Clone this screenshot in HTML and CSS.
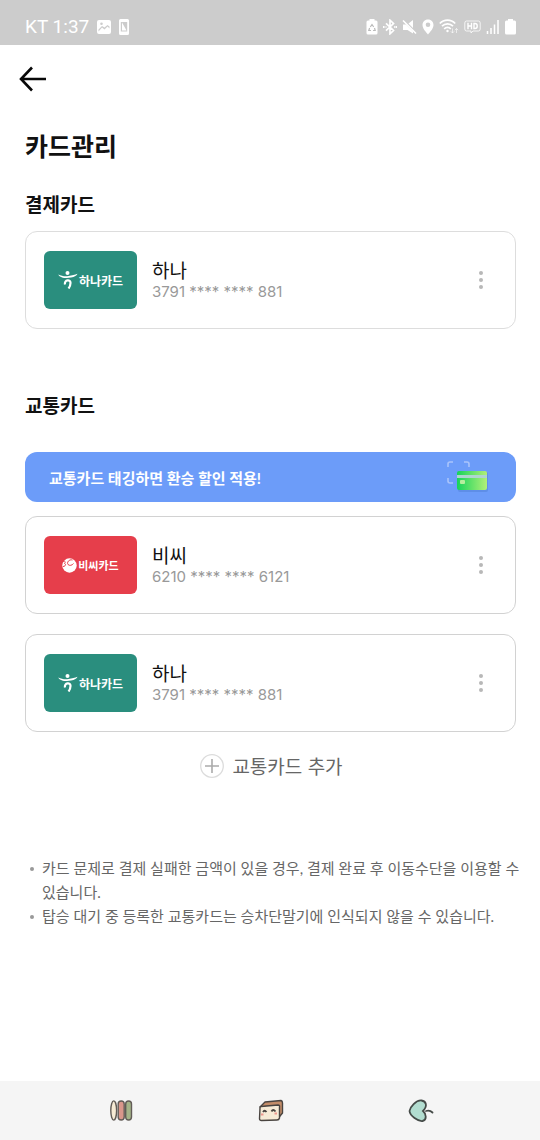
FILE: index.html
```html
<!DOCTYPE html>
<html lang="ko">
<head>
<meta charset="utf-8">
<meta name="viewport" content="width=device-width, initial-scale=1">
<title>카드관리</title>
<link rel="stylesheet" href="styles.css">
</head>
<body>
<svg class="defs" aria-hidden="true">
  <symbol id="hana" viewBox="0 0 20 18">
    <circle cx="9.500" cy="2" r="2"/>
    <path d="M.3 3.400C3.500 5 7 5.500 10.500 5C14 4.500 17 3.500 19.500 2.700C19 4.500 16.500 5.800 13 6.600C8.500 7.700 2 7 .3 3.400Z"/>
    <path d="M7 13.500C6 8.500 12.800 8 12.500 12C12.400 14.500 11.800 16 10.500 17.500" fill="none" stroke="currentColor" stroke-width="2.200"/>
  </symbol>
  <symbol id="more" viewBox="0 0 6 20">
    <circle cx="3" cy="3" r="2"/><circle cx="3" cy="10" r="2"/><circle cx="3" cy="17" r="2"/>
  </symbol>
</svg>
<div class="page">
  <div class="status">
    <div class="status-left">
      <span class="clock">KT 1:37</span>
      <svg width="14" height="14" viewBox="0 0 14 14"><path fill-rule="evenodd" fill="currentColor" d="M2 0H12Q14 0 14 2V12Q14 14 12 14H2Q0 14 0 12V2Q0 0 2 0ZM1.500 11.500L5 7.500L7.500 9.500L10.500 6.500L12.500 8.500V6.500L10.500 5L7.500 7.500L5 6L1.500 9.500ZM4.500 2.500A1.300 1.300 0 1 0 4.500 5.100A1.300 1.300 0 1 0 4.500 2.500Z"/></svg>
      <svg class="phone" width="10" height="16" viewBox="0 0 10 16"><path fill="currentColor" fill-rule="evenodd" d="M1.500 0H8.500Q10 0 10 1.500V14.500Q10 16 8.500 16H1.500Q0 16 0 14.500V1.500Q0 0 1.500 0ZM1.800 3V12.500H8.200V3Z"/><path fill="currentColor" d="M3 3.500L7.500 11.500H3Z"/></svg>
    </div>
    <div class="status-right">
      <svg width="12" height="16" viewBox="0 0 12 16"><path fill="currentColor" d="M3.500 1.500V0H8.500V1.500H10Q11.500 1.500 11.500 3V14Q11.500 15.500 10 15.500H2Q.5 15.500 .5 14V3Q.5 1.500 2 1.500Z"/><path d="M4.300 8L6 5.500L7.700 8M8.500 9L9.200 11.500H7M5 11.500H2.800L3.600 9" fill="none" stroke="#bbb" stroke-width="1.200"/></svg>
      <svg width="14" height="16" viewBox="0 0 14 16" fill="none" stroke="currentColor" stroke-width="1.700"><path d="M3 4.300L10.500 11.500L7 14.800V1.200L10.500 4.500L3 11.700M.7 7V9M2.500 8H3.500M11 8H12M13.300 7V9"/></svg>
      <svg width="15" height="16" viewBox="0 0 15 16"><path fill="currentColor" d="M1 5.500H4L11 12.500V14.500L5.500 11H1ZM6.500 4.500L11 1V9Z"/><path d="M1 1.500L14 14.500" stroke="currentColor" stroke-width="1.600"/></svg>
      <svg width="12" height="16" viewBox="0 0 12 16"><path fill="currentColor" fill-rule="evenodd" d="M6 .5C2.500 .5 .5 3 .5 6C.5 9.500 4 13 6 15.500C8 13 11.500 9.500 11.500 6C11.500 3 9.500 .5 6 .5ZM6 3.500A2.300 2.300 0 1 0 6 8.100A2.300 2.300 0 1 0 6 3.500Z"/></svg>
      <svg width="20" height="16" viewBox="0 0 20 16" fill="none" stroke="currentColor" stroke-width="1.700"><path d="M.8 4.500C5 0 12 0 16.200 4.500M3 7.200C6 4 11 4 14 7.200M5.200 10C7 7.800 10 7.800 11.800 10"/><circle cx="8.500" cy="12" r="1.200" fill="currentColor" stroke="none"/><path d="M13.500 9.500V14M11.800 12.300L13.500 14L15.200 12.300M17.500 14V9.500M15.800 11.200L17.500 9.500L19.200 11.200" stroke-width="1" opacity=".6"/></svg>
      <svg width="17" height="16" viewBox="0 0 17 16" fill="none" stroke="currentColor"><path opacity=".8" d="M2.500 2H14.500Q16.200 2 16.200 4V10Q16.200 12 14.500 12H9L7 14V12H2.500Q.8 12 .8 10V4Q.8 2 2.500 2Z"/><path stroke-width="1.400" d="M4 3.800V10.200M7.500 3.800V10.200M4 7H7.500M10 4.500H11C14 4.500 14 9.500 11 9.500H10Z"/></svg>
      <svg width="14" height="16" viewBox="0 0 14 16"><path d="M1.500 12V15M5 9V15M8.500 5.500V15M12 1V15" stroke="currentColor" stroke-width="1.500"/></svg>
      <svg width="11" height="16" viewBox="0 0 11 16"><path fill="currentColor" d="M3 1.500V0H8V1.500H9.500Q11 1.500 11 3V14Q11 15.500 9.500 15.500H1.500Q0 15.500 0 14V3Q0 1.500 1.500 1.500Z"/></svg>
    </div>
  </div>

  <header class="header">
    <button class="icon-button" type="button" aria-label="뒤로">
      <svg width="28" height="26" viewBox="0 0 28 26" fill="none" stroke="#080808" stroke-width="2.600"><path d="M13 1.500L2 13L13 24.500M2 13H27"/></svg>
    </button>
  </header>

  <main class="content">
    <h1 class="title">카드관리</h1>

    <section class="payment">
      <h2 class="subtitle">결제카드</h2>
      <article class="card">
        <div class="brand brand-hana"><svg class="hana-mark" width="20" height="18"><use href="#hana"/></svg><span>하나카드</span></div>
        <div class="info"><h3 class="name">하나</h3><p class="number">3791 **** **** 881</p></div>
        <button class="icon-button" type="button" aria-label="하나 카드 메뉴"><svg class="more" width="6" height="20"><use href="#more"/></svg></button>
      </article>
    </section>

    <section class="transit">
      <h2 class="subtitle">교통카드</h2>
      <div class="banner">
        <span>교통카드 태깅하면 환승 할인 적용!</span>
        <svg width="42" height="34" viewBox="0 0 42 34">
          <defs><linearGradient id="green"><stop offset="0" stop-color="#16d35b"/><stop offset="1" stop-color="#b2f078"/></linearGradient></defs>
          <path d="M1 7V4Q1 2 3 2H6M17 2H20Q22 2 22 4V7M1 18V21Q1 23 3 23H6" fill="none" stroke="#a9c4fb" stroke-width="1.600"/>
          <rect x="11" y="12" width="30" height="20" rx="2" fill="#4f7fd5" opacity=".5"/>
          <rect x="10" y="11" width="30" height="19" rx="2" fill="url(#green)"/>
          <path d="M10 15H40V18H10Z" fill="#aed5d0"/>
          <rect x="13" y="20" width="5" height="4" rx="1" fill="#b6ee9d"/>
        </svg>
      </div>
      <div class="card-list">
        <article class="card">
          <div class="brand brand-bc"><svg width="15" height="15" viewBox="0 0 15 15"><circle cx="7.500" cy="7.500" r="7.200" fill="#fff"/><path d="M1 3.500C3 2.500 4 4 2.500 5.500C4.500 6 3.500 8.500 1 8.500M10.500 2C7 1 4.500 4.500 6 6.500C7.500 8 10 7.500 11.500 5.500" fill="none" stroke="#e63e4b" stroke-width="1"/></svg><span>비씨카드</span></div>
          <div class="info"><h3 class="name">비씨</h3><p class="number">6210 **** **** 6121</p></div>
          <button class="icon-button" type="button" aria-label="비씨 카드 메뉴"><svg class="more" width="6" height="20"><use href="#more"/></svg></button>
        </article>
        <article class="card">
          <div class="brand brand-hana"><svg class="hana-mark" width="20" height="18"><use href="#hana"/></svg><span>하나카드</span></div>
          <div class="info"><h3 class="name">하나</h3><p class="number">3791 **** **** 881</p></div>
          <button class="icon-button" type="button" aria-label="하나 교통카드 메뉴"><svg class="more" width="6" height="20"><use href="#more"/></svg></button>
        </article>
      </div>
      <button class="add" type="button">
        <svg width="24" height="24" viewBox="0 0 24 24" fill="none"><circle cx="12" cy="12" r="11.300" stroke="#dcdcdc" stroke-width="1.300"/><path d="M5 12H19M12 5V19" stroke="#aaa" stroke-width="1.600"/></svg>
        <span>교통카드 추가</span>
      </button>
    </section>

    <ul class="notes">
      <li>카드 문제로 결제 실패한 금액이 있을 경우, 결제 완료 후 이동수단을 이용할 수 있습니다.</li>
      <li>탑승 대기 중 등록한 교통카드는 승차단말기에 인식되지 않을 수 있습니다.</li>
    </ul>
  </main>

  <nav class="system-nav" aria-label="시스템 탐색">
    <button class="icon-button" type="button" aria-label="최근 앱">
      <svg width="24" height="24" viewBox="0 0 24 24" stroke="#625c57" stroke-width="1.400"><ellipse cx="4.700" cy="11.500" rx="2.900" ry="9.600" fill="#f6ead4"/><rect x="9.200" y="2" width="6" height="19" rx="3" fill="#d9968b"/><rect x="16.700" y="2" width="5.800" height="19" rx="2.900" fill="#a4b388"/></svg>
    </button>
    <button class="icon-button" type="button" aria-label="홈">
      <svg width="26" height="24" viewBox="0 0 26 24" stroke="#494440" stroke-width="1.400" stroke-linejoin="round"><path d="M2 8L7 3L23 1.500Q24.500 2 24.500 4V14L20 19.500L18 7Z" fill="#c38c68"/><path d="M3 7.500L20 6Q22 6 21.500 8V19Q21 21 19 21L3.500 21.500Q1.500 21.500 1.500 19.500L2 9Q2 7.500 3 7.500Z" fill="#f7ebd6"/><path d="M5 13Q6.500 10.500 8.500 13M13.500 12.500Q15 9.500 17.500 12.500" fill="none" stroke-width="1.800"/><path d="M3 15.500H5.500M16.500 14.500H19" stroke="#ed9a90" stroke-width="2"/></svg>
    </button>
    <button class="icon-button" type="button" aria-label="뒤로 가기">
      <svg width="26" height="24" viewBox="0 0 26 24" fill="#b2ddd0" stroke="#454b48" stroke-width="1.800" stroke-linecap="round"><path d="M15 12C20 7 18 2 13.500 1.500C8 1 2 8 1.500 12C2 17 10 22.500 14.500 22C19 21 18.500 15 15 12Z"/><path d="M18 12Q22 11 24.500 13.500" fill="none"/></svg>
    </button>
  </nav>
</div>
</body>
</html>
```
FILE: styles.css
```css
* { box-sizing: border-box; }
body, h1, h2, h3, p, ul { margin: 0; padding: 0; }
body {
  background: #fff;
  color: #111;
  font-family: Inter, "Noto Sans CJK KR", sans-serif;
}
button { border: 0; padding: 0; background: none; color: inherit; font: inherit; cursor: pointer; }
svg { display: block; flex: none; }
.defs { position: absolute; width: 0; height: 0; }
.page { display: flex; flex-direction: column; min-height: 100vh; }
.icon-button { display: flex; align-items: center; justify-content: center; }

.status {
  display: flex;
  justify-content: space-between;
  align-items: center;
  height: 45px;
  padding: 9px 24px 0 25px;
  background: #ccc;
  color: #fff;
}
.status-left, .status-right { display: flex; align-items: center; }
.status-left { gap: 8px; }
.status-right { gap: 5px; }
.clock { font: 19px/20px Roboto, sans-serif; }

.header { padding: 21px 19px 0; }
.content { flex: 1; padding: 0 24px 0 25px; font-family: "Noto Sans CJK KR", sans-serif; }
.title { margin-top: 35px; font-size: 25px; line-height: 36px; font-weight: 700; }
.subtitle { font-size: 19px; line-height: 28px; font-weight: 700; }
.payment { margin-top: 27px; }
.payment .card { margin-top: 13px; }
.transit { margin-top: 62px; }

.card {
  display: flex;
  align-items: center;
  padding: 19px 31px 19px 18px;
  border: 1px solid #ddd;
  border-radius: 12px;
}
.card-list { display: grid; gap: 20px; margin-top: 14px; }
.card-list .card { border-color: #d2d2d2; }
.brand {
  display: flex;
  align-items: center;
  justify-content: center;
  gap: 1px;
  width: 93px;
  height: 58px;
  border-radius: 6px;
  color: #fff;
  font-size: 12px;
  font-weight: 700;
}
.brand-hana { background: #2a8e7e; }
.brand-bc { background: #e63e4b; font-size: 11px; }
.hana-mark { fill: currentColor; }
.info { flex: 1; margin-left: 15px; }
.name { font-size: 19px; line-height: 24px; font-weight: 400; }
.number { color: #999; font: 15px/20px Inter, sans-serif; }
.more { fill: #b8b8b8; }

.banner {
  display: flex;
  align-items: center;
  justify-content: space-between;
  height: 50px;
  margin-top: 33px;
  padding: 0 27px 0 24px;
  border-radius: 12px;
  background: #6c9cf9;
  color: #fff;
  font-family: Lato, "Noto Sans CJK KR", sans-serif;
  font-size: 15px;
  font-weight: 700;
}
.add {
  display: flex;
  align-items: center;
  gap: 8px;
  margin: 20px auto 0;
  padding-left: 2px;
  color: #666;
  font-size: 19px;
  line-height: 28px;
}
.notes {
  margin: 76px -8px 0 0;
  list-style: none;
  color: #666;
  font-family: Lato, "Noto Sans CJK KR", sans-serif;
  font-size: 15px;
  line-height: 24px;
}
.notes li { display: flex; gap: 8px; padding-left: 5px; }
.notes li::before {
  content: "";
  flex: none;
  width: 4px;
  height: 4px;
  margin-top: 11px;
  border-radius: 50%;
  background: #999;
}

.system-nav {
  display: grid;
  grid-template-columns: repeat(3, 1fr);
  height: 59px;
  padding: 0 44px 0 46px;
  background: #f5f5f5;
}
```
